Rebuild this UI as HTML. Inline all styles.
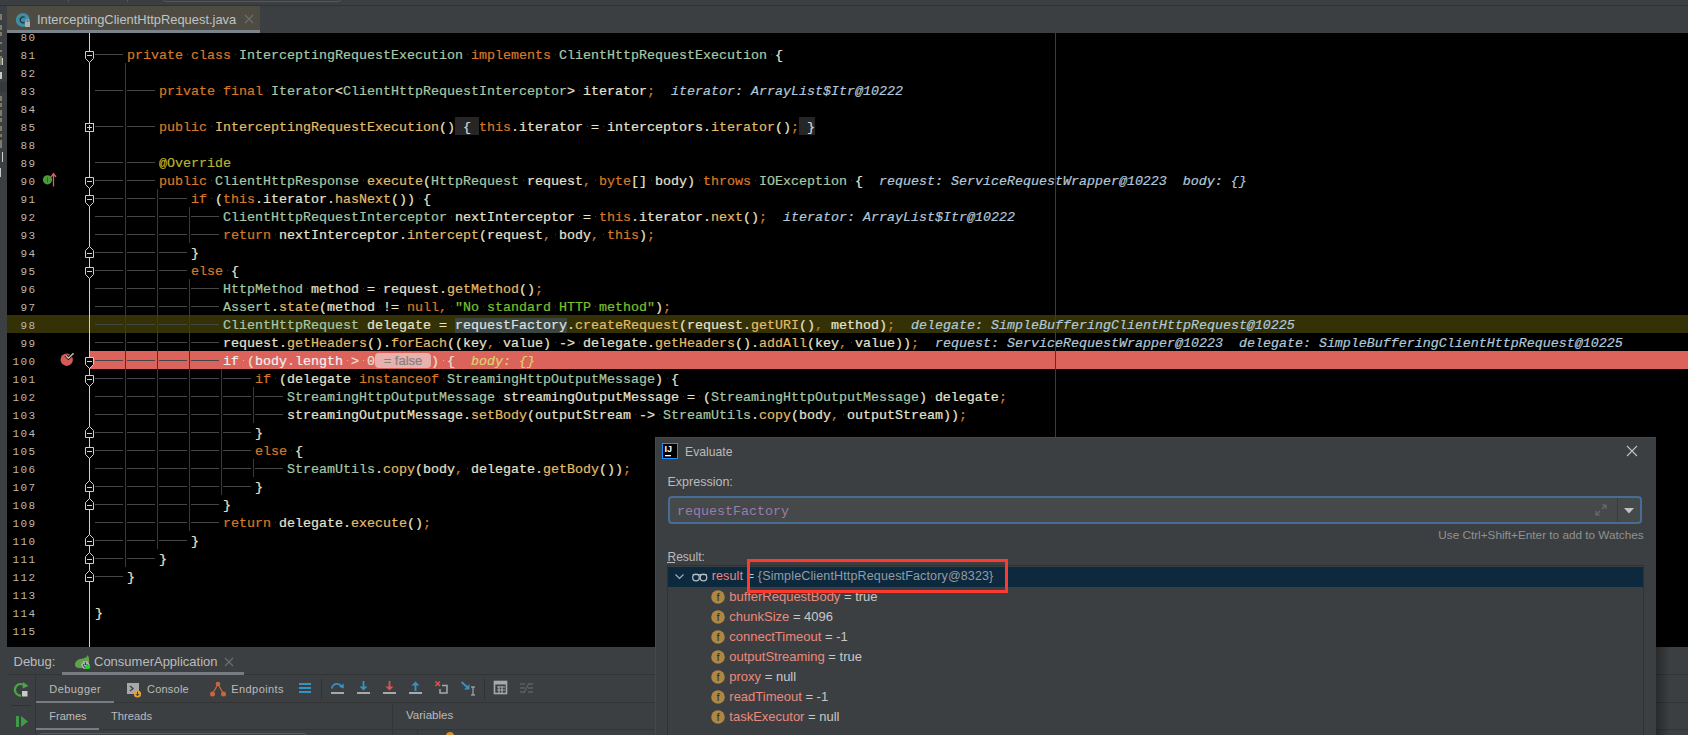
<!DOCTYPE html>
<html><head><meta charset="utf-8">
<style>
*{margin:0;padding:0;box-sizing:border-box}
html,body{width:1688px;height:735px;overflow:hidden;background:#3c3f41;font-family:"Liberation Sans",sans-serif}
#root{position:relative;width:1688px;height:735px;overflow:hidden}
.abs{position:absolute}
#editor{position:absolute;left:7px;top:33px;width:1681px;height:614px;background:#000;overflow:hidden}
#code{position:absolute;left:0;top:0;width:1688px;height:735px}
.L{position:absolute;height:18px;line-height:18px;padding-top:2px;white-space:pre;font-family:"Liberation Mono",monospace;font-size:13.333px;color:#e8e3cc;-webkit-text-stroke:0.2px}
.L b{font-weight:normal}
.k{color:#d87a26}.c{color:#a9c8a6}.m{color:#e3bd68}.a{color:#bbb529}.s{color:#7cc12c}.i{color:#e8e3cc}
.w{display:inline-block;width:8px;height:16px;vertical-align:top;background:linear-gradient(#3a3a3a,#3a3a3a) no-repeat 4px 7px/1px 1px}
.bp b{color:#f4f0f0!important}.bp .pill{color:#86807f!important}.bp .w{background-image:linear-gradient(#f0b0b0,#f0b0b0)}
.h{font-style:italic;color:#b0c8d8}
.hy{color:#d8d46a}
.fb{background:#262626;color:#d8d8d8;display:inline-block;height:18px;margin-top:-2px;padding-top:2px;vertical-align:top}
.sel{background:#3a4640;color:#e0e0e0}
.pill{display:inline-block;width:56px;height:15px;line-height:15px;text-align:center;margin:0;border-radius:4px;background:#e9b1ae;color:#8a8282!important;font-family:"Liberation Sans",sans-serif;font-size:13px;vertical-align:top;margin-top:0px;position:relative;top:0px}
.ln{position:absolute;left:0;width:36.5px;text-align:right;height:18px;line-height:18px;padding-top:2px;font-family:"Liberation Mono",monospace;font-size:11px;letter-spacing:1.4px;color:#bdb9ae}
.t{position:absolute;white-space:nowrap;line-height:1;font-family:"Liberation Sans",sans-serif}
.ui{font-family:"Liberation Sans",sans-serif;font-size:12.5px;color:#bbbbbb;white-space:nowrap;position:absolute}
</style></head><body><div id="root">

<div class="abs" style="left:0;top:0;width:7px;height:735px;background:#3c3f41"></div>
<div id="editor"></div>
<div id="code">
<div class="abs" style="left:7px;top:315px;width:1681px;height:18px;background:#343106"></div>
<div class="abs" style="left:89px;top:351px;width:1599px;height:18px;background:#db635c"></div>
<div class="abs" style="left:1055px;top:33px;width:1px;height:614px;background:#34422f"></div>
<svg class="abs" style="left:0;top:0" width="1688" height="735"><rect x="125" y="63" width="1" height="504" fill="#3a3a3a"/><rect x="157" y="189" width="1" height="360" fill="#3a3a3a"/><rect x="189" y="207" width="1" height="36" fill="#3a3a3a"/><rect x="189" y="279" width="1" height="252" fill="#3a3a3a"/><rect x="221" y="369" width="1" height="126" fill="#3a3a3a"/><rect x="253" y="387" width="1" height="36" fill="#3a3a3a"/><rect x="253" y="459" width="1" height="18" fill="#3a3a3a"/><rect x="89" y="33" width="1" height="614" fill="#cfcfcf"/><rect x="95" y="54" width="28" height="1" fill="#464646"/><rect x="95" y="90" width="28" height="1" fill="#464646"/><rect x="127" y="90" width="28" height="1" fill="#464646"/><rect x="95" y="126" width="28" height="1" fill="#464646"/><rect x="127" y="126" width="28" height="1" fill="#464646"/><rect x="95" y="162" width="28" height="1" fill="#464646"/><rect x="127" y="162" width="28" height="1" fill="#464646"/><rect x="95" y="180" width="28" height="1" fill="#464646"/><rect x="127" y="180" width="28" height="1" fill="#464646"/><rect x="95" y="198" width="28" height="1" fill="#464646"/><rect x="127" y="198" width="28" height="1" fill="#464646"/><rect x="159" y="198" width="28" height="1" fill="#464646"/><rect x="95" y="216" width="28" height="1" fill="#464646"/><rect x="127" y="216" width="28" height="1" fill="#464646"/><rect x="159" y="216" width="28" height="1" fill="#464646"/><rect x="191" y="216" width="28" height="1" fill="#464646"/><rect x="95" y="234" width="28" height="1" fill="#464646"/><rect x="127" y="234" width="28" height="1" fill="#464646"/><rect x="159" y="234" width="28" height="1" fill="#464646"/><rect x="191" y="234" width="28" height="1" fill="#464646"/><rect x="95" y="252" width="28" height="1" fill="#464646"/><rect x="127" y="252" width="28" height="1" fill="#464646"/><rect x="159" y="252" width="28" height="1" fill="#464646"/><rect x="95" y="270" width="28" height="1" fill="#464646"/><rect x="127" y="270" width="28" height="1" fill="#464646"/><rect x="159" y="270" width="28" height="1" fill="#464646"/><rect x="95" y="288" width="28" height="1" fill="#464646"/><rect x="127" y="288" width="28" height="1" fill="#464646"/><rect x="159" y="288" width="28" height="1" fill="#464646"/><rect x="191" y="288" width="28" height="1" fill="#464646"/><rect x="95" y="306" width="28" height="1" fill="#464646"/><rect x="127" y="306" width="28" height="1" fill="#464646"/><rect x="159" y="306" width="28" height="1" fill="#464646"/><rect x="191" y="306" width="28" height="1" fill="#464646"/><rect x="95" y="324" width="28" height="1" fill="#464646"/><rect x="127" y="324" width="28" height="1" fill="#464646"/><rect x="159" y="324" width="28" height="1" fill="#464646"/><rect x="191" y="324" width="28" height="1" fill="#464646"/><rect x="95" y="342" width="28" height="1" fill="#464646"/><rect x="127" y="342" width="28" height="1" fill="#464646"/><rect x="159" y="342" width="28" height="1" fill="#464646"/><rect x="191" y="342" width="28" height="1" fill="#464646"/><rect x="95" y="360" width="28" height="1" fill="#464646"/><rect x="127" y="360" width="28" height="1" fill="#464646"/><rect x="159" y="360" width="28" height="1" fill="#464646"/><rect x="191" y="360" width="28" height="1" fill="#464646"/><rect x="95" y="378" width="28" height="1" fill="#464646"/><rect x="127" y="378" width="28" height="1" fill="#464646"/><rect x="159" y="378" width="28" height="1" fill="#464646"/><rect x="191" y="378" width="28" height="1" fill="#464646"/><rect x="223" y="378" width="28" height="1" fill="#464646"/><rect x="95" y="396" width="28" height="1" fill="#464646"/><rect x="127" y="396" width="28" height="1" fill="#464646"/><rect x="159" y="396" width="28" height="1" fill="#464646"/><rect x="191" y="396" width="28" height="1" fill="#464646"/><rect x="223" y="396" width="28" height="1" fill="#464646"/><rect x="255" y="396" width="28" height="1" fill="#464646"/><rect x="95" y="414" width="28" height="1" fill="#464646"/><rect x="127" y="414" width="28" height="1" fill="#464646"/><rect x="159" y="414" width="28" height="1" fill="#464646"/><rect x="191" y="414" width="28" height="1" fill="#464646"/><rect x="223" y="414" width="28" height="1" fill="#464646"/><rect x="255" y="414" width="28" height="1" fill="#464646"/><rect x="95" y="432" width="28" height="1" fill="#464646"/><rect x="127" y="432" width="28" height="1" fill="#464646"/><rect x="159" y="432" width="28" height="1" fill="#464646"/><rect x="191" y="432" width="28" height="1" fill="#464646"/><rect x="223" y="432" width="28" height="1" fill="#464646"/><rect x="95" y="450" width="28" height="1" fill="#464646"/><rect x="127" y="450" width="28" height="1" fill="#464646"/><rect x="159" y="450" width="28" height="1" fill="#464646"/><rect x="191" y="450" width="28" height="1" fill="#464646"/><rect x="223" y="450" width="28" height="1" fill="#464646"/><rect x="95" y="468" width="28" height="1" fill="#464646"/><rect x="127" y="468" width="28" height="1" fill="#464646"/><rect x="159" y="468" width="28" height="1" fill="#464646"/><rect x="191" y="468" width="28" height="1" fill="#464646"/><rect x="223" y="468" width="28" height="1" fill="#464646"/><rect x="255" y="468" width="28" height="1" fill="#464646"/><rect x="95" y="486" width="28" height="1" fill="#464646"/><rect x="127" y="486" width="28" height="1" fill="#464646"/><rect x="159" y="486" width="28" height="1" fill="#464646"/><rect x="191" y="486" width="28" height="1" fill="#464646"/><rect x="223" y="486" width="28" height="1" fill="#464646"/><rect x="95" y="504" width="28" height="1" fill="#464646"/><rect x="127" y="504" width="28" height="1" fill="#464646"/><rect x="159" y="504" width="28" height="1" fill="#464646"/><rect x="191" y="504" width="28" height="1" fill="#464646"/><rect x="95" y="522" width="28" height="1" fill="#464646"/><rect x="127" y="522" width="28" height="1" fill="#464646"/><rect x="159" y="522" width="28" height="1" fill="#464646"/><rect x="191" y="522" width="28" height="1" fill="#464646"/><rect x="95" y="540" width="28" height="1" fill="#464646"/><rect x="127" y="540" width="28" height="1" fill="#464646"/><rect x="159" y="540" width="28" height="1" fill="#464646"/><rect x="95" y="558" width="28" height="1" fill="#464646"/><rect x="127" y="558" width="28" height="1" fill="#464646"/><rect x="95" y="576" width="28" height="1" fill="#464646"/><path d="M85.5 51.5 H93.5 V58.5 L89.5 62.5 L85.5 58.5 Z" fill="#000" stroke="#cfcfcf" stroke-width="1"/><rect x="87" y="55" width="5" height="1" fill="#cfcfcf"/><path d="M85.5 357.5 H93.5 V364.5 L89.5 368.5 L85.5 364.5 Z" fill="#000" stroke="#cfcfcf" stroke-width="1"/><rect x="87" y="361" width="5" height="1" fill="#cfcfcf"/><path d="M85.5 375.5 H93.5 V382.5 L89.5 386.5 L85.5 382.5 Z" fill="#000" stroke="#cfcfcf" stroke-width="1"/><rect x="87" y="379" width="5" height="1" fill="#cfcfcf"/><path d="M85.5 447.5 H93.5 V454.5 L89.5 458.5 L85.5 454.5 Z" fill="#000" stroke="#cfcfcf" stroke-width="1"/><rect x="87" y="451" width="5" height="1" fill="#cfcfcf"/><path d="M85.5 177.5 H93.5 V184.5 L89.5 188.5 L85.5 184.5 Z" fill="#000" stroke="#cfcfcf" stroke-width="1"/><rect x="87" y="181" width="5" height="1" fill="#cfcfcf"/><path d="M85.5 195.5 H93.5 V202.5 L89.5 206.5 L85.5 202.5 Z" fill="#000" stroke="#cfcfcf" stroke-width="1"/><rect x="87" y="199" width="5" height="1" fill="#cfcfcf"/><path d="M85.5 267.5 H93.5 V274.5 L89.5 278.5 L85.5 274.5 Z" fill="#000" stroke="#cfcfcf" stroke-width="1"/><rect x="87" y="271" width="5" height="1" fill="#cfcfcf"/><path d="M89.5 570.5 L93.5 574.5 V581.5 H85.5 V574.5 Z" fill="#000" stroke="#cfcfcf" stroke-width="1"/><rect x="87" y="577" width="5" height="1" fill="#cfcfcf"/><path d="M89.5 426.5 L93.5 430.5 V437.5 H85.5 V430.5 Z" fill="#000" stroke="#cfcfcf" stroke-width="1"/><rect x="87" y="433" width="5" height="1" fill="#cfcfcf"/><path d="M89.5 246.5 L93.5 250.5 V257.5 H85.5 V250.5 Z" fill="#000" stroke="#cfcfcf" stroke-width="1"/><rect x="87" y="253" width="5" height="1" fill="#cfcfcf"/><path d="M89.5 480.5 L93.5 484.5 V491.5 H85.5 V484.5 Z" fill="#000" stroke="#cfcfcf" stroke-width="1"/><rect x="87" y="487" width="5" height="1" fill="#cfcfcf"/><path d="M89.5 498.5 L93.5 502.5 V509.5 H85.5 V502.5 Z" fill="#000" stroke="#cfcfcf" stroke-width="1"/><rect x="87" y="505" width="5" height="1" fill="#cfcfcf"/><path d="M89.5 534.5 L93.5 538.5 V545.5 H85.5 V538.5 Z" fill="#000" stroke="#cfcfcf" stroke-width="1"/><rect x="87" y="541" width="5" height="1" fill="#cfcfcf"/><path d="M89.5 552.5 L93.5 556.5 V563.5 H85.5 V556.5 Z" fill="#000" stroke="#cfcfcf" stroke-width="1"/><rect x="87" y="559" width="5" height="1" fill="#cfcfcf"/><rect x="85.5" y="123.5" width="8" height="8" fill="#000" stroke="#cfcfcf"/><rect x="87" y="127" width="5" height="1" fill="#cfcfcf"/><rect x="89" y="125" width="1" height="5" fill="#cfcfcf"/></svg>
<div class="ln" style="top:27px">80</div><div class="ln" style="top:45px">81</div><div class="ln" style="top:63px">82</div><div class="ln" style="top:81px">83</div><div class="ln" style="top:99px">84</div><div class="ln" style="top:117px">85</div><div class="ln" style="top:135px">88</div><div class="ln" style="top:153px">89</div><div class="ln" style="top:171px">90</div><div class="ln" style="top:189px">91</div><div class="ln" style="top:207px">92</div><div class="ln" style="top:225px">93</div><div class="ln" style="top:243px">94</div><div class="ln" style="top:261px">95</div><div class="ln" style="top:279px">96</div><div class="ln" style="top:297px">97</div><div class="ln" style="top:315px">98</div><div class="ln" style="top:333px">99</div><div class="ln" style="top:351px">100</div><div class="ln" style="top:369px">101</div><div class="ln" style="top:387px">102</div><div class="ln" style="top:405px">103</div><div class="ln" style="top:423px">104</div><div class="ln" style="top:441px">105</div><div class="ln" style="top:459px">106</div><div class="ln" style="top:477px">107</div><div class="ln" style="top:495px">108</div><div class="ln" style="top:513px">109</div><div class="ln" style="top:531px">110</div><div class="ln" style="top:549px">111</div><div class="ln" style="top:567px">112</div><div class="ln" style="top:585px">113</div><div class="ln" style="top:603px">114</div><div class="ln" style="top:621px">115</div>
<div class="L" style="top:45px;left:127px"><b class="k">private</b><b class="w"> </b><b class="k">class</b><b class="w"> </b><b class="c">InterceptingRequestExecution</b><b class="w"> </b><b class="k">implements</b><b class="w"> </b><b class="c">ClientHttpRequestExecution</b><b class="w"> </b>{</div><div class="L" style="top:81px;left:159px"><b class="k">private</b><b class="w"> </b><b class="k">final</b><b class="w"> </b><b class="c">Iterator</b>&lt;<b class="c">ClientHttpRequestInterceptor</b>&gt;<b class="w"> </b><b class="i">iterator</b><b class="k">;</b><b class="h">  iterator: ArrayList$Itr@10222</b></div><div class="L" style="top:117px;left:159px"><b class="k">public</b><b class="w"> </b><b class="m">InterceptingRequestExecution</b>()<b class="fb"> { </b><b class="k">this</b>.<b class="i">iterator</b><b class="w"> </b>=<b class="w"> </b><b class="i">interceptors</b>.<b class="m">iterator</b>()<b class="k">;</b><b class="fb"> }</b></div><div class="L" style="top:153px;left:159px"><b class="a">@Override</b></div><div class="L" style="top:171px;left:159px"><b class="k">public</b><b class="w"> </b><b class="c">ClientHttpResponse</b><b class="w"> </b><b class="m">execute</b>(<b class="c">HttpRequest</b><b class="w"> </b><b class="i">request</b><b class="k">,</b><b class="w"> </b><b class="k">byte</b>[]<b class="w"> </b><b class="i">body</b>)<b class="w"> </b><b class="k">throws</b><b class="w"> </b><b class="c">IOException</b><b class="w"> </b>{<b class="h">  request: ServiceRequestWrapper@10223  body: {}</b></div><div class="L" style="top:189px;left:191px"><b class="k">if</b><b class="w"> </b>(<b class="k">this</b>.<b class="i">iterator</b>.<b class="m">hasNext</b>())<b class="w"> </b>{</div><div class="L" style="top:207px;left:223px"><b class="c">ClientHttpRequestInterceptor</b><b class="w"> </b><b class="i">nextInterceptor</b><b class="w"> </b>=<b class="w"> </b><b class="k">this</b>.<b class="i">iterator</b>.<b class="m">next</b>()<b class="k">;</b><b class="h">  iterator: ArrayList$Itr@10222</b></div><div class="L" style="top:225px;left:223px"><b class="k">return</b><b class="w"> </b><b class="i">nextInterceptor</b>.<b class="m">intercept</b>(<b class="i">request</b><b class="k">,</b><b class="w"> </b><b class="i">body</b><b class="k">,</b><b class="w"> </b><b class="k">this</b>)<b class="k">;</b></div><div class="L" style="top:243px;left:191px">}</div><div class="L" style="top:261px;left:191px"><b class="k">else</b><b class="w"> </b>{</div><div class="L" style="top:279px;left:223px"><b class="c">HttpMethod</b><b class="w"> </b><b class="i">method</b><b class="w"> </b>=<b class="w"> </b><b class="i">request</b>.<b class="m">getMethod</b>()<b class="k">;</b></div><div class="L" style="top:297px;left:223px"><b class="c">Assert</b>.<b class="m">state</b>(<b class="i">method</b><b class="w"> </b>!=<b class="w"> </b><b class="k">null</b><b class="k">,</b><b class="w"> </b><b class="s">"No<b class="w"> </b>standard<b class="w"> </b>HTTP<b class="w"> </b>method"</b>)<b class="k">;</b></div><div class="L" style="top:315px;left:223px"><b class="c">ClientHttpRequest</b><b class="w"> </b><b class="i">delegate</b><b class="w"> </b>=<b class="w"> </b><b class="sel">requestFactory</b>.<b class="m">createRequest</b>(<b class="i">request</b>.<b class="m">getURI</b>()<b class="k">,</b><b class="w"> </b><b class="i">method</b>)<b class="k">;</b><b class="h">  delegate: SimpleBufferingClientHttpRequest@10225</b></div><div class="L" style="top:333px;left:223px"><b class="i">request</b>.<b class="m">getHeaders</b>().<b class="m">forEach</b>((<b class="i">key</b><b class="k">,</b><b class="w"> </b><b class="i">value</b>)<b class="w"> </b>-&gt;<b class="w"> </b><b class="i">delegate</b>.<b class="m">getHeaders</b>().<b class="m">addAll</b>(<b class="i">key</b><b class="k">,</b><b class="w"> </b><b class="i">value</b>))<b class="k">;</b><b class="h">  request: ServiceRequestWrapper@10223  delegate: SimpleBufferingClientHttpRequest@10225</b></div><div class="L" style="top:351px;left:223px"><span class="bp"><b class="k">if</b><b class="w"> </b>(<b class="i">body</b>.<b class="i">length</b><b class="w"> </b>&gt;<b class="w"> </b>0<b class="pill">= false</b>)<b class="w"> </b>{</span><b class="h hy">  body: {}</b></div><div class="L" style="top:369px;left:255px"><b class="k">if</b><b class="w"> </b>(<b class="i">delegate</b><b class="w"> </b><b class="k">instanceof</b><b class="w"> </b><b class="c">StreamingHttpOutputMessage</b>)<b class="w"> </b>{</div><div class="L" style="top:387px;left:287px"><b class="c">StreamingHttpOutputMessage</b><b class="w"> </b><b class="i">streamingOutputMessage</b><b class="w"> </b>=<b class="w"> </b>(<b class="c">StreamingHttpOutputMessage</b>)<b class="w"> </b><b class="i">delegate</b><b class="k">;</b></div><div class="L" style="top:405px;left:287px"><b class="i">streamingOutputMessage</b>.<b class="m">setBody</b>(<b class="i">outputStream</b><b class="w"> </b>-&gt;<b class="w"> </b><b class="c">StreamUtils</b>.<b class="m">copy</b>(<b class="i">body</b><b class="k">,</b><b class="w"> </b><b class="i">outputStream</b>))<b class="k">;</b></div><div class="L" style="top:423px;left:255px">}</div><div class="L" style="top:441px;left:255px"><b class="k">else</b><b class="w"> </b>{</div><div class="L" style="top:459px;left:287px"><b class="c">StreamUtils</b>.<b class="m">copy</b>(<b class="i">body</b><b class="k">,</b><b class="w"> </b><b class="i">delegate</b>.<b class="m">getBody</b>())<b class="k">;</b></div><div class="L" style="top:477px;left:255px">}</div><div class="L" style="top:495px;left:223px">}</div><div class="L" style="top:513px;left:223px"><b class="k">return</b><b class="w"> </b><b class="i">delegate</b>.<b class="m">execute</b>()<b class="k">;</b></div><div class="L" style="top:531px;left:191px">}</div><div class="L" style="top:549px;left:159px">}</div><div class="L" style="top:567px;left:127px">}</div><div class="L" style="top:603px;left:95px">}</div>
<!-- gutter icons -->
<svg class="abs" style="left:40px;top:171px" width="20" height="18"><circle cx="7.5" cy="8.8" r="4.6" fill="#4c9a3a"/><rect x="7.1" y="6.3" width="0.8" height="5" fill="#2f5526"/><path d="M13.5 15.5 V3.5 M11 6 L13.5 2.5 L16 6" fill="none" stroke="#d9605e" stroke-width="1.3"/></svg>
<svg class="abs" style="left:58px;top:351px" width="18" height="18"><circle cx="8.7" cy="8.7" r="6.2" fill="#d65a55"/><path d="M7.6 4.3 L10.4 7.2 L15.6 2.2" fill="none" stroke="#000" stroke-width="3"/><path d="M7.6 4.3 L10.4 7.2 L15.6 2.2" fill="none" stroke="#c4c4c4" stroke-width="1.5"/></svg>
</div>

<div class="abs" style="left:0px;top:5px;width:1688px;height:1px;background:#2f3133;"></div><div class="abs" style="left:163px;top:-10px;width:178px;height:12px;border:1px solid #55585a;border-radius:3px"></div><div class="abs" style="left:68px;top:0px;width:1px;height:2px;background:#55585a;"></div><div class="abs" style="left:127px;top:0px;width:1px;height:2px;background:#55585a;"></div><div class="abs" style="left:7px;top:6px;width:253px;height:24px;background:#4e4c42;"></div><div class="abs" style="left:7px;top:30px;width:253px;height:3px;background:#7b838c;"></div><svg class="abs" style="left:14px;top:12px" width="20" height="18" viewBox="0 0 20 18"><circle cx="8.8" cy="7.9" r="7" fill="#3e8ea6"/><path d="M10.6 5.4 A2.9 2.9 0 1 0 10.6 10.4" fill="none" stroke="#26363c" stroke-width="1.3"/><rect x="11" y="10" width="5" height="5" fill="#a8b0b5"/><path d="M12 10.5 V8.8 a1.5 1.5 0 0 1 3 0 V10.5" fill="none" stroke="#a8b0b5" stroke-width="1"/></svg><div class="t" style="left:37.00px;top:14.08px;font-size:12.90px;color:#bfc3c7">InterceptingClientHttpRequest.java</div><svg class="abs" style="left:243px;top:13px" width="12" height="12"><path d="M2 2 L10 10 M10 2 L2 10" stroke="#6e6e6e" stroke-width="1.1"/></svg><div class="abs" style="left:0px;top:82px;width:7px;height:10px;background:#36383a;"></div><div class="abs" style="left:0px;top:14px;width:2px;height:6px;background:#7f7b68;"></div><div class="abs" style="left:0px;top:25px;width:2px;height:5px;background:#7f7b68;"></div><div class="abs" style="left:0px;top:32px;width:2px;height:4px;background:#7f7b68;"></div><div class="abs" style="left:0px;top:42px;width:2px;height:2px;background:#7f7b68;"></div><div class="abs" style="left:0px;top:50px;width:2px;height:2px;background:#7f7b68;"></div><div class="abs" style="left:0px;top:56px;width:2px;height:9px;background:#7f7b68;"></div><div class="abs" style="left:0px;top:96px;width:2px;height:5px;background:#7f7b68;"></div><div class="abs" style="left:0px;top:103px;width:2px;height:4px;background:#7f7b68;"></div><div class="abs" style="left:0px;top:110px;width:2px;height:6px;background:#7f7b68;"></div><div class="abs" style="left:0px;top:118px;width:2px;height:4px;background:#7f7b68;"></div><div class="abs" style="left:0px;top:126px;width:2px;height:5px;background:#7f7b68;"></div><div class="abs" style="left:0px;top:134px;width:2px;height:3px;background:#7f7b68;"></div><div class="abs" style="left:0px;top:140px;width:2px;height:8px;background:#7f7b68;"></div><div class="abs" style="left:2px;top:58px;width:1px;height:7px;background:#d0d0d0;"></div><div class="abs" style="left:0px;top:72px;width:2px;height:7px;background:#c8c8c8;"></div><div class="abs" style="left:2px;top:152px;width:1px;height:10px;background:#d0d0d0;"></div><div class="abs" style="left:0px;top:168px;width:1px;height:9px;background:#c8c8c8;"></div><div class="abs" style="left:7px;top:647px;width:1681px;height:88px;background:#3c3f41;"></div><div class="abs" style="left:7px;top:674px;width:1681px;height:1px;background:#323436;"></div><div class="abs" style="left:36px;top:702px;width:1652px;height:1px;background:#323436;"></div><div class="abs" style="left:36px;top:729px;width:1652px;height:1px;background:#323436;"></div><div class="t" style="left:13.50px;top:654.60px;font-size:13.00px;color:#bbbbbb">Debug:</div><svg class="abs" style="left:74px;top:654px" width="18" height="16"><path d="M1 11 C0.8 6.5 5 5 9 4.5 C11.5 4.2 13 2.5 13.8 1 C15.6 4 15.6 8 14.5 10.5 L9 14 C5 14.5 1.2 14 1 11 Z" fill="#5fa347"/><path d="M15.8 11 L13.6 14.8 L9.2 14.8 L7 11 L9.2 7.2 L13.6 7.2 Z" fill="#a8b2bc"/><path d="M10 10 A1.9 1.9 0 1 0 12.8 10" fill="none" stroke="#2e3133" stroke-width="1"/><path d="M11.4 8.2 V11" stroke="#2e3133" stroke-width="1"/><circle cx="14" cy="12.9" r="2.2" fill="#0be30b"/></svg><div class="t" style="left:94.00px;top:654.60px;font-size:13.00px;color:#bbbbbb">ConsumerApplication</div><svg class="abs" style="left:223px;top:656px" width="12" height="12"><path d="M2 2 L10 10 M10 2 L2 10" stroke="#6e6e6e" stroke-width="1.1"/></svg><div class="abs" style="left:62px;top:672px;width:182px;height:3px;background:#787c82;"></div><div class="abs" style="left:35px;top:675px;width:1px;height:60px;background:#323436;"></div><svg class="abs" style="left:12px;top:680px" width="20" height="20"><path d="M13.5 6.5 A5.8 5.8 0 1 0 9 15.6" fill="none" stroke="#4da24a" stroke-width="2.2"/><path d="M11 2 L16.5 6 L10.5 8.5 Z" fill="#4da24a"/><rect x="10" y="11" width="5.5" height="5.5" fill="#c9c9c9"/></svg><div class="abs" style="left:11px;top:705px;width:20px;height:1px;background:#2f3133;"></div><svg class="abs" style="left:14px;top:714px" width="16" height="16"><rect x="2" y="2" width="3" height="11" fill="#3f9c46"/><path d="M7 2 L14 7.5 L7 13 Z" fill="#3f9c46"/></svg><div class="t" style="left:49.30px;top:684.29px;font-size:11.00px;color:#bbbbbb;letter-spacing:0.440px">Debugger</div><div class="abs" style="left:36px;top:701px;width:78px;height:2px;background:#787c82;"></div><svg class="abs" style="left:126px;top:682px" width="16" height="16"><rect x="1" y="1" width="12" height="11" fill="#a8a8a8"/><path d="M4 4 L7 6.5 L4 9" fill="none" stroke="#3c3f41" stroke-width="1.3"/><circle cx="11.5" cy="12" r="3.6" fill="#eaa034"/><path d="M11.5 9.7 V13.5 M9.8 12 L11.5 13.8 L13.2 12" fill="none" stroke="#3c3f41" stroke-width="1"/></svg><div class="t" style="left:147.00px;top:684.29px;font-size:11.00px;color:#bbbbbb;letter-spacing:0.230px">Console</div><svg class="abs" style="left:209px;top:681px" width="18" height="16"><path d="M3.5 13 L9 3 L14.5 13" fill="none" stroke="#c5683a" stroke-width="1.3"/><circle cx="9" cy="3" r="2.3" fill="#c5683a"/><circle cx="3.5" cy="13" r="2.5" fill="#c5683a"/><circle cx="14.5" cy="13" r="2.5" fill="#c5683a"/></svg><div class="t" style="left:231.30px;top:684.29px;font-size:11.00px;color:#bbbbbb;letter-spacing:0.410px">Endpoints</div><svg class="abs" style="left:298px;top:681px" width="14" height="14"><rect x="1" y="2" width="12" height="2" fill="#3592c4"/><rect x="1" y="6" width="12" height="2" fill="#3592c4"/><rect x="1" y="10" width="12" height="2" fill="#3592c4"/></svg><div class="abs" style="left:321px;top:679px;width:1px;height:20px;background:#2f3133;"></div><svg class="abs" style="left:330px;top:680px" width="16" height="16"><path d="M1.8 8.5 C3 3 9 2.5 11.5 6.5" fill="none" stroke="#3592c4" stroke-width="1.7"/><path d="M9 6.8 L13.8 8.6 L13.6 3.6 Z" fill="#3592c4"/><rect x="1" y="12" width="13" height="2" fill="#a8a8a8"/></svg><svg class="abs" style="left:356px;top:680px" width="16" height="16"><path d="M7.5 1 V8" stroke="#3592c4" stroke-width="1.8"/><path d="M3.5 6.5 L7.5 10.5 L11.5 6.5 Z" fill="#3592c4"/><rect x="1" y="12" width="13" height="2" fill="#a8a8a8"/></svg><svg class="abs" style="left:382px;top:680px" width="16" height="16"><path d="M7.5 1 V8" stroke="#d9534f" stroke-width="1.8"/><path d="M3.5 6.5 L7.5 10.5 L11.5 6.5 Z" fill="#d9534f"/><rect x="1" y="12" width="13" height="2" fill="#a8a8a8"/></svg><svg class="abs" style="left:408px;top:680px" width="16" height="16"><path d="M7.5 4 V11" stroke="#3592c4" stroke-width="1.8"/><path d="M3.5 5.5 L7.5 1.5 L11.5 5.5 Z" fill="#3592c4"/><rect x="1" y="12" width="13" height="2" fill="#a8a8a8"/></svg><svg class="abs" style="left:434px;top:680px" width="16" height="16"><path d="M1.5 1.5 L6 6 M6 1.5 L1.5 6" stroke="#d9534f" stroke-width="1.6"/><path d="M8 5.5 H13 V13 H6 V9" fill="none" stroke="#a8a8a8" stroke-width="1.5"/></svg><svg class="abs" style="left:460px;top:680px" width="18" height="18"><path d="M1.5 2 L8 8" stroke="#3592c4" stroke-width="1.8"/><path d="M9.5 4 V9.5 H4 Z" fill="#3592c4"/><path d="M11 7 H15 M13 7 V15 M11 15 H15" stroke="#bbbbbb" stroke-width="1"/></svg><div class="abs" style="left:484px;top:679px;width:1px;height:20px;background:#2f3133;"></div><svg class="abs" style="left:493px;top:680px" width="16" height="16"><rect x="1.5" y="1.5" width="12" height="12" fill="none" stroke="#a8a8a8" stroke-width="1.6"/><rect x="1.5" y="1.5" width="12" height="3" fill="#a8a8a8"/><path d="M4 7 H12 M4 10 H12 M6 6 V13 M9 6 V13" stroke="#a8a8a8" stroke-width="1.2"/></svg><svg class="abs" style="left:519px;top:680px" width="16" height="16"><path d="M1 4 H6 M1 8 H6 M1 12 H6 M9 4 H14 M9 8 H14 M9 12 H14 M5 13 L10 3" stroke="#5d5f61" stroke-width="1.4"/></svg><div class="t" style="left:49.30px;top:710.69px;font-size:11.00px;color:#bbbbbb">Frames</div><div class="t" style="left:111.00px;top:710.52px;font-size:11.20px;color:#bbbbbb">Threads</div><div class="abs" style="left:36px;top:728px;width:63px;height:2px;background:#787c82;"></div><div class="abs" style="left:392px;top:703px;width:1px;height:32px;background:#323436;"></div><div class="t" style="left:406.00px;top:710.22px;font-size:11.55px;color:#bbbbbb">Variables</div><div class="abs" style="left:417px;top:730px;width:1px;height:5px;background:#323436;"></div><div class="abs" style="left:446px;top:732px;width:8px;height:8px;border-radius:4px;background:#d5902e"></div><div class="abs" style="left:39px;top:733px;width:268px;height:6px;border:1px solid #5a5d60;border-radius:3px"></div><div class="abs" style="left:1656px;top:437px;width:14px;height:298px;background:linear-gradient(to right,rgba(0,0,0,0.35),rgba(0,0,0,0))"></div><div class="abs" style="left:655px;top:437px;width:1001px;height:298px;background:#3c3f41;border-top:1px solid #46484a;border-left:1px solid #46484a"></div><svg class="abs" style="left:662px;top:443px" width="16" height="16"><rect x="0.5" y="0.5" width="15" height="15" fill="#000" stroke="#1f8fff"/><text x="2.5" y="9" font-family="Liberation Sans" font-weight="bold" font-size="9" fill="#fff">IJ</text><rect x="3" y="12" width="6" height="1.3" fill="#fff"/></svg><div class="t" style="left:685.00px;top:445.67px;font-size:12.20px;color:#bbbbbb">Evaluate</div><svg class="abs" style="left:1626px;top:445px" width="12" height="12"><path d="M1 1 L11 11 M11 1 L1 11" stroke="#bdbdbd" stroke-width="1.2"/></svg><div class="t" style="left:667.50px;top:476.42px;font-size:12.50px;color:#bbbbbb">Expression:</div><div class="abs" style="left:668px;top:496px;width:974px;height:28px;border:2px solid #466d94;border-radius:4px;background:#45494a"></div><div class="abs" style="left:1617px;top:498px;width:1px;height:24px;background:#3a3d3f;"></div><svg class="abs" style="left:1622px;top:505px" width="14" height="12"><path d="M2 3 H12 L7 8.5 Z" fill="#c0c0c0"/></svg><svg class="abs" style="left:1594px;top:503px" width="14" height="14"><path d="M2 12 L6 8 M12 2 L8 6 M2 8 V12 H6 M8 2 H12 V6" fill="none" stroke="#6a6d6f" stroke-width="1.1"/></svg><div class="abs" style="left:677px;top:503px;font-family:'Liberation Mono',monospace;font-size:13.333px;line-height:18px;color:#9a7cae;white-space:pre">requestFactory</div><div class="t" style="left:1438.30px;top:529.05px;font-size:11.75px;color:#8f9294">Use Ctrl+Shift+Enter to add to Watches</div><div class="t" style="left:667.50px;top:551.14px;font-size:12.00px;color:#bbbbbb">Result:</div><div class="abs" style="left:667px;top:562px;width:8px;height:1px;background:#bbbbbb;"></div><div class="abs" style="left:667px;top:565px;width:977px;height:170px;border-left:1px solid #2f3133;border-right:1px solid #2f3133;border-top:1px solid #2f3133"></div><div class="abs" style="left:668px;top:567px;width:975px;height:20px;background:#0d293e;"></div><svg class="abs" style="left:673px;top:571px" width="12" height="12"><path d="M2.5 3.5 L6.5 7.5 L10.5 3.5" fill="none" stroke="#a8b0b8" stroke-width="1.1"/></svg><svg class="abs" style="left:690px;top:570px" width="20" height="14"><circle cx="6" cy="7.5" r="3.3" fill="none" stroke="#b4bcc4" stroke-width="1.3"/><circle cx="13.5" cy="7.5" r="3.3" fill="none" stroke="#b4bcc4" stroke-width="1.3"/><path d="M2.7 4.6 H16.8" stroke="#b4bcc4" stroke-width="1.1"/></svg><div class="t" style="left:711.70px;top:570.12px;font-size:12.50px;color:#c8c8c8;letter-spacing:0.147px"><span style="color:#e98a7e">result</span> = <span style="color:#949ca3">{SimpleClientHttpRequestFactory@8323}</span></div><svg class="abs" style="left:711px;top:590px" width="14" height="14"><circle cx="7" cy="7" r="6.8" fill="#ad8743"/><text x="7" y="11" text-anchor="middle" font-family="Liberation Sans" font-size="11.5" fill="#3a3020">f</text></svg><div class="t" style="left:729.30px;top:589.70px;font-size:13.00px;color:#c8c8c8"><span style="color:#e98a7e">bufferRequestBody</span> = true</div><svg class="abs" style="left:711px;top:610px" width="14" height="14"><circle cx="7" cy="7" r="6.8" fill="#ad8743"/><text x="7" y="11" text-anchor="middle" font-family="Liberation Sans" font-size="11.5" fill="#3a3020">f</text></svg><div class="t" style="left:729.30px;top:609.70px;font-size:13.00px;color:#c8c8c8"><span style="color:#e98a7e">chunkSize</span> = 4096</div><svg class="abs" style="left:711px;top:630px" width="14" height="14"><circle cx="7" cy="7" r="6.8" fill="#ad8743"/><text x="7" y="11" text-anchor="middle" font-family="Liberation Sans" font-size="11.5" fill="#3a3020">f</text></svg><div class="t" style="left:729.30px;top:629.70px;font-size:13.00px;color:#c8c8c8"><span style="color:#e98a7e">connectTimeout</span> = -1</div><svg class="abs" style="left:711px;top:650px" width="14" height="14"><circle cx="7" cy="7" r="6.8" fill="#ad8743"/><text x="7" y="11" text-anchor="middle" font-family="Liberation Sans" font-size="11.5" fill="#3a3020">f</text></svg><div class="t" style="left:729.30px;top:649.70px;font-size:13.00px;color:#c8c8c8"><span style="color:#e98a7e">outputStreaming</span> = true</div><svg class="abs" style="left:711px;top:670px" width="14" height="14"><circle cx="7" cy="7" r="6.8" fill="#ad8743"/><text x="7" y="11" text-anchor="middle" font-family="Liberation Sans" font-size="11.5" fill="#3a3020">f</text></svg><div class="t" style="left:729.30px;top:669.70px;font-size:13.00px;color:#c8c8c8"><span style="color:#e98a7e">proxy</span> = null</div><svg class="abs" style="left:711px;top:690px" width="14" height="14"><circle cx="7" cy="7" r="6.8" fill="#ad8743"/><text x="7" y="11" text-anchor="middle" font-family="Liberation Sans" font-size="11.5" fill="#3a3020">f</text></svg><div class="t" style="left:729.30px;top:689.70px;font-size:13.00px;color:#c8c8c8"><span style="color:#e98a7e">readTimeout</span> = -1</div><svg class="abs" style="left:711px;top:710px" width="14" height="14"><circle cx="7" cy="7" r="6.8" fill="#ad8743"/><text x="7" y="11" text-anchor="middle" font-family="Liberation Sans" font-size="11.5" fill="#3a3020">f</text></svg><div class="t" style="left:729.30px;top:709.70px;font-size:13.00px;color:#c8c8c8"><span style="color:#e98a7e">taskExecutor</span> = null</div><div class="abs" style="left:747px;top:559px;width:261px;height:34px;border:3px solid #fd3a30"></div>
</div></body></html>
